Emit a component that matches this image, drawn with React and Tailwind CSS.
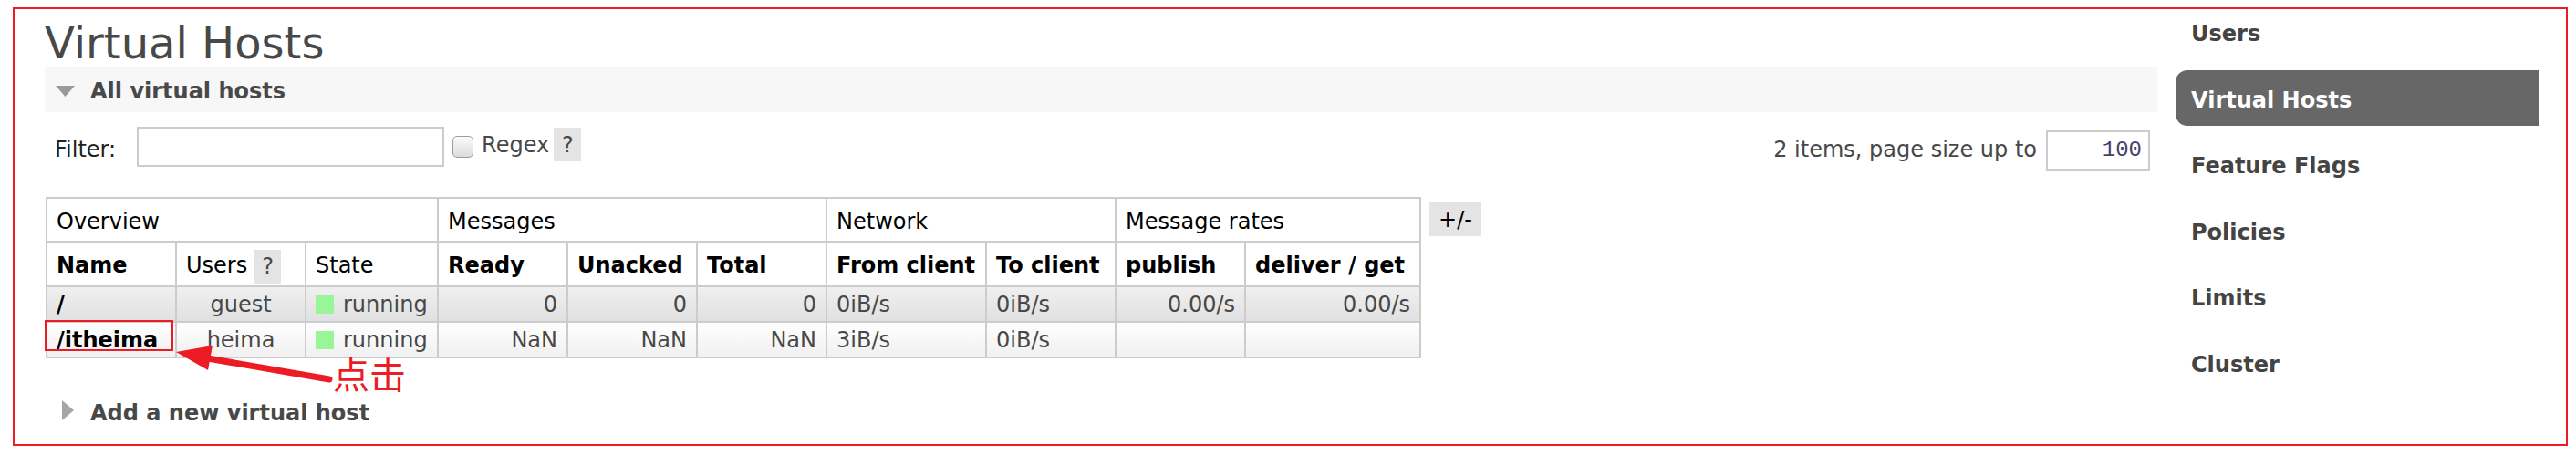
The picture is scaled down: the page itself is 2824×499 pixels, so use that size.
import React from "react";

const rows = [
  {
    cls: "bg-gradient-to-b from-[#f0f0f0] to-[#e0e0e0]",
    name: "/",
    users: "guest",
    ready: "0",
    unacked: "0",
    total: "0",
    from: "0iB/s",
    to: "0iB/s",
    publish: "0.00/s",
    deliver: "0.00/s",
  },
  {
    cls: "bg-gradient-to-b from-[#ffffff] to-[#f0f0f0]",
    name: "/itheima",
    users: "heima",
    ready: "NaN",
    unacked: "NaN",
    total: "NaN",
    from: "3iB/s",
    to: "0iB/s",
    publish: "",
    deliver: "",
  },
];

const navItems = ["Users", "Virtual Hosts", "Feature Flags", "Policies", "Limits", "Cluster"];

function HelpBox({ className }) {
  return (
    <span className={"inline-flex items-center justify-center bg-[#e4e4e4] text-[#484848] " + className}>?</span>
  );
}

export default function App() {
  const th = "border-2 border-[#cccccc] pt-[11px] pb-[7px] px-[10px] text-left align-top";
  const td = "border-2 border-[#cccccc] pt-[5px] pb-[4px] px-[10px] align-top whitespace-nowrap";
  return (
    <div className="relative w-[2824px] h-[499px] overflow-hidden bg-white font-['DejaVu_Sans',Verdana,sans-serif] text-[24px] leading-[28px] text-[#484848]">
      <div className="ml-[14px] mt-[8px] flex h-[481px] w-[2801px] border-2 border-[#ed1c24]">
        {/* Main column */}
        <div className="ml-[33px] flex w-[2316px] flex-col">
          <h1 className="mt-[10px] text-[48px] font-normal leading-[54px] text-[#484848]">Virtual Hosts</h1>

          <div className="flex h-[49px] items-center bg-[#f7f7f7] pl-[12px] pt-[2px]">
            <svg width="21" height="12" viewBox="0 0 21 12" className="shrink-0">
              <polygon points="0,0 21,0 10.5,12" fill="#9a9a9a" />
            </svg>
            <h2 className="ml-[17px] text-[24px] font-bold leading-[28px] text-[#484848]">All virtual hosts</h2>
          </div>

          <div className="mt-[16px] flex h-[44px] items-start justify-between">
            <div className="flex items-start pl-[11px]">
              <span className="mt-[11px] text-[#222]">Filter:</span>
              <div className="ml-[23px] h-[44px] w-[337px] border-2 border-[#cccccc] bg-white" />
              <span className="ml-[9px] mt-[10px] h-[24px] w-[23px] rounded-[5px] border-[1.5px] border-[#9c9c9c] bg-gradient-to-b from-[#fbfbfb] to-[#dcdcdc]" />
              <span className="ml-[9px] mt-[6px] text-[#484848]">Regex</span>
              <HelpBox className="ml-[5px] mt-[1px] h-[37px] w-[30px]" />
            </div>
            <div className="flex items-start pr-[8px]">
              <span className="mt-[11px] text-[#484848]">2 items, page size up to</span>
              <div className="ml-[10px] mt-[4px] flex h-[44px] w-[114px] items-center justify-end border-2 border-[#cccccc] pr-[7px] font-['Liberation_Mono',monospace] text-[24px] text-[#4a3d6a]">
                100
              </div>
            </div>
          </div>

          <div className="mt-[33px] flex items-start pl-[1px]">
            <table className="w-[1508px] table-fixed border-collapse">
              <colgroup>
                <col className="w-[142px]" />
                <col className="w-[142px]" />
                <col className="w-[145px]" />
                <col className="w-[142px]" />
                <col className="w-[142px]" />
                <col className="w-[142px]" />
                <col className="w-[175px]" />
                <col className="w-[142px]" />
                <col className="w-[142px]" />
                <col className="w-[192px]" />
              </colgroup>
              <thead>
                <tr className="bg-white text-black">
                  <th colSpan={3} className={th + " font-normal"}>Overview</th>
                  <th colSpan={3} className={th + " font-normal"}>Messages</th>
                  <th colSpan={2} className={th + " font-normal"}>Network</th>
                  <th colSpan={2} className={th + " font-normal"}>Message rates</th>
                </tr>
                <tr className="bg-white text-black">
                  <th className={th + " font-bold"}>Name</th>
                  <th className={th + " font-normal whitespace-nowrap"}>
                    Users<HelpBox className="ml-[8px] -my-[5px] h-[37px] w-[29px] align-middle" />
                  </th>
                  <th className={th + " font-normal"}>State</th>
                  <th className={th + " font-bold"}>Ready</th>
                  <th className={th + " font-bold"}>Unacked</th>
                  <th className={th + " font-bold"}>Total</th>
                  <th className={th + " font-bold whitespace-nowrap"}>From client</th>
                  <th className={th + " font-bold whitespace-nowrap"}>To client</th>
                  <th className={th + " font-bold"}>publish</th>
                  <th className={th + " font-bold whitespace-nowrap"}>deliver / get</th>
                </tr>
              </thead>
              <tbody>
                {rows.map((r) => (
                  <tr key={r.name} className={r.cls}>
                    <td className={td + " font-bold text-black"}>{r.name}</td>
                    <td className={td + " text-center"}>{r.users}</td>
                    <td className={td}>
                      <div className="flex items-center">
                        <span className="h-[20px] w-[20px] bg-[#98f598]" />
                        <span className="ml-[10px]">running</span>
                      </div>
                    </td>
                    <td className={td + " text-right"}>{r.ready}</td>
                    <td className={td + " text-right"}>{r.unacked}</td>
                    <td className={td + " text-right"}>{r.total}</td>
                    <td className={td}>{r.from}</td>
                    <td className={td}>{r.to}</td>
                    <td className={td + " text-right"}>{r.publish}</td>
                    <td className={td + " text-right"}>{r.deliver}</td>
                  </tr>
                ))}
              </tbody>
            </table>
            <button className="ml-[9px] mt-[6px] h-[37px] w-[57px] bg-[#e4e4e4] text-[24px] leading-[28px] text-black">
              +/-
            </button>
          </div>

          <div className="mt-[46px] flex items-start pl-[19px]">
            <svg width="13" height="22" viewBox="0 0 13 22" className="shrink-0">
              <polygon points="0,0 13,11 0,22" fill="#a5a5a5" />
            </svg>
            <h2 className="ml-[18px] text-[24px] font-bold leading-[28px] text-[#484848]">Add a new virtual host</h2>
          </div>
        </div>

        {/* Sidebar */}
        <nav className="-mt-[6px] ml-[20px] flex w-[398px] flex-col gap-[11.6px]">
          {navItems.map((item) => (
            <div
              key={item}
              className={
                item === "Virtual Hosts"
                  ? "h-[61px] shrink-0 rounded-l-[13px] bg-[#676767] pl-[17px] pt-[19px] font-bold text-white"
                  : "h-[61px] shrink-0 pl-[17px] pt-[19px] font-bold text-[#444444]"
              }
            >
              {item}
            </div>
          ))}
        </nav>
      </div>

      {/* Red annotation overlay */}
      <svg className="pointer-events-none absolute left-0 top-0" width="2824" height="499" viewBox="0 0 2824 499">
        <rect x="50" y="352" width="139" height="32" fill="none" stroke="#ed1c24" strokeWidth="2" />
        <line x1="222" y1="392" x2="361" y2="416" stroke="#ed1c24" strokeWidth="7" strokeLinecap="round" />
        <polygon points="193,386 233,379 228,406" fill="#ed1c24" />
      </svg>
      <span className="absolute left-[365px] top-[389px] font-['Noto_Sans_CJK_SC',sans-serif] text-[40px] leading-[40px] text-[#ed1c24]">
        点击
      </span>
    </div>
  );
}
